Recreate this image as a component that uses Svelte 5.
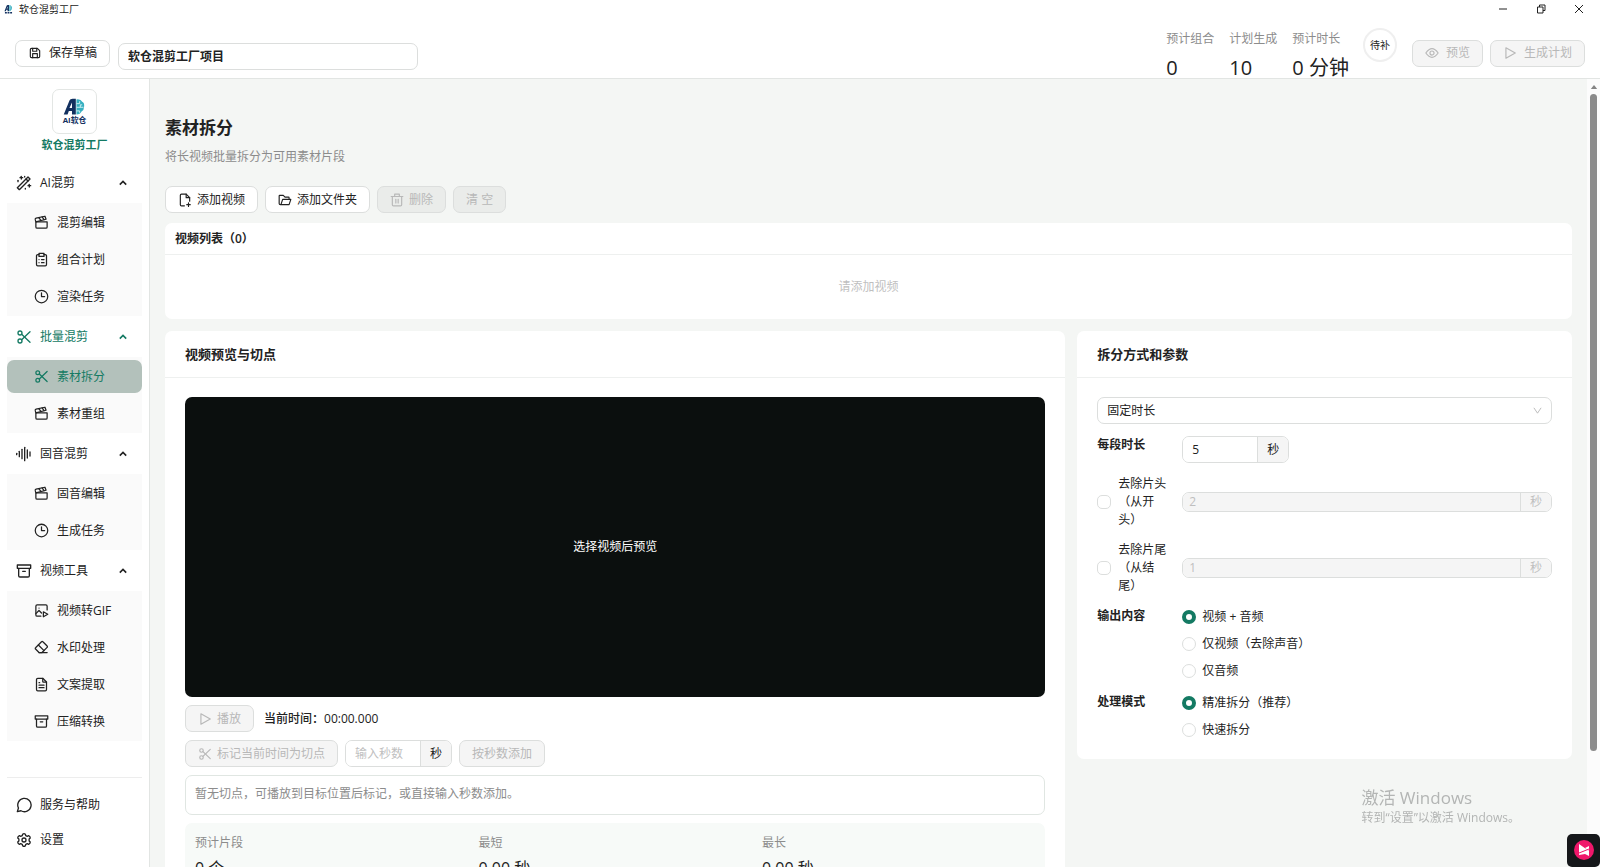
<script>
	const icons = {
		save: ['M6 4h10l4 4v10a2 2 0 0 1-2 2H6a2 2 0 0 1-2-2V6a2 2 0 0 1 2-2', 'M8 4v5h7V4', 'M8 20v-7h8v7'],
		wand: ['M5 22L21 6l-3-3L2 19z', 'M15 6l3 3', 'M8 2v4', 'M6 4h4', 'M20 14v4', 'M18 16h4', 'M3 8v2', 'M13 2v1', 'M14 20v1'],
		clapper: ['M3 11h18v8a2 2 0 0 1-2 2H5a2 2 0 0 1-2-2z', 'M3 11L2 7.500a2 2 0 0 1 1.400-2.400L17.500 2l1.800 4.800z', 'M8 4.500l3 4', 'M13 3l3 4.500'],
		clipboard: ['M8 4H6a2 2 0 0 0-2 2v14a2 2 0 0 0 2 2h12a2 2 0 0 0 2-2V6a2 2 0 0 0-2-2h-2', 'M8 2h8v5H8z', 'M8 12h.01', 'M8 17h.01', 'M12 12h4', 'M12 17h4'],
		clock: ['M2 12a10 10 0 1 0 20 0a10 10 0 1 0-20 0', 'M12 6v6h5'],
		scissors: ['M3 6a3 3 0 1 0 6 0a3 3 0 1 0-6 0', 'M3 18a3 3 0 1 0 6 0a3 3 0 1 0-6 0', 'M8.500 8L21 20', 'M8.500 16L21 4'],
		wave: ['M1 11v2', 'M5 8v8', 'M9 5v14', 'M13 2v20', 'M17 6v12', 'M21 9v6'],
		archive: ['M2 3h20v5H2z', 'M4 8v11a2 2 0 0 0 2 2h12a2 2 0 0 0 2-2V8', 'M10 12.500h4'],
		gif: ['M11 21H5a2 2 0 0 1-2-2V5a2 2 0 0 1 2-2h14a2 2 0 0 1 2 2v6', 'M8 8h.01', 'M3 17l5-5l4 4', 'M15 14l7 4l-7 4z'],
		eraser: ['M8 20l-5.500-5.500a1.500 1.500 0 0 1 0-2.200L12 2.800a1.500 1.500 0 0 1 2.200 0l6.800 6.800a1.500 1.500 0 0 1 0 2.200L12.800 20z', 'M7 8l9 9', 'M8 20h13'],
		file: ['M14 2v5a1 1 0 0 0 1 1h5', 'M18 22H6a2 2 0 0 1-2-2V4a2 2 0 0 1 2-2h8l6 6v12a2 2 0 0 1-2 2z', 'M8 9h1', 'M8 13h8', 'M8 17h8'],
		message: ['M2 22l1.700-5.500A10 10 0 1 1 7.500 20.600z'],
		settings: ['M10 3.500q2-2 4 0l.700 2 2.200.900 2-.800q2.500 1 2.500 3.500l-1.700 1.500v2.800l1.700 1.500q0 2.500-2.500 3.500l-2-.800-2.200.900-.700 2q-2 2-4 0l-.700-2-2.200-.900-2 .800q-2.500-1-2.500-3.500l1.700-1.500v-2.800L2.600 9.100q0-2.500 2.500-3.500l2 .800 2.200-.900z', 'M9 12a3 3 0 1 0 6 0a3 3 0 1 0-6 0'],
		fileAdd: ['M11 22H6a2 2 0 0 1-2-2V4a2 2 0 0 1 2-2h8l6 6v6', 'M14 2v6h6', 'M18 17v6', 'M15 20h6'],
		folder: ['M5 20L8 11h14l-3 9H4a2 2 0 0 1-2-2V5a1 1 0 0 1 1-1h6l3 3h6a1 1 0 0 1 1 1v3'],
		trash: ['M2 6h20', 'M4 6v14a2 2 0 0 0 2 2h12a2 2 0 0 0 2-2V6', 'M8 6V2h8v4', 'M10 11v6', 'M14 11v6'],
		eye: ['M1.500 12q10.500-15 21 0q-10.500 15-21 0', 'M8.500 12a3.500 3.500 0 1 0 7 0a3.500 3.500 0 1 0-7 0'],
		play: ['M5 3l16 9l-16 9z']
	};

	const menu = [
		{
			label: 'AI混剪', icon: 'wand',
			items: [
				{ label: '混剪编辑', icon: 'clapper' },
				{ label: '组合计划', icon: 'clipboard' },
				{ label: '渲染任务', icon: 'clock' }
			]
		},
		{
			label: '批量混剪', icon: 'scissors', active: true,
			items: [
				{ label: '素材拆分', icon: 'scissors', active: true },
				{ label: '素材重组', icon: 'clapper' }
			]
		},
		{
			label: '固音混剪', icon: 'wave',
			items: [
				{ label: '固音编辑', icon: 'clapper' },
				{ label: '生成任务', icon: 'clock' }
			]
		},
		{
			label: '视频工具', icon: 'archive',
			items: [
				{ label: '视频转GIF', icon: 'gif' },
				{ label: '水印处理', icon: 'eraser' },
				{ label: '文案提取', icon: 'file' },
				{ label: '压缩转换', icon: 'archive' }
			]
		}
	];

	const planStats = [
		{ label: '预计组合', value: '0' },
		{ label: '计划生成', value: '10' },
		{ label: '预计时长', value: '0 分钟' }
	];

	const splitStats = [
		{ label: '预计片段', value: '0 个' },
		{ label: '最短', value: '0.00 秒' },
		{ label: '最长', value: '0.00 秒' }
	];

	let projectName = $state('软仓混剪工厂项目');
	let splitMode = $state('fixed');
	let segment = $state('5');
	let markSeconds = $state('');
	let trimHead = $state(false);
	let trimTail = $state(false);
	let headSeconds = $state('2');
	let tailSeconds = $state('1');
	let output = $state('both');
	let process = $state('precise');
</script>

{#snippet icon(name)}
	<svg class="icon" viewBox="0 0 24 24" aria-hidden="true">
		{#each icons[name] as d}
			<path {d} />
		{/each}
	</svg>
{/snippet}

{#snippet mark()}
	<path d="M0 26L9 3Q10 0 14 0h5v26h-6v-6H8l-2 6zM9 15h4V6z" fill="#12305f" fill-rule="evenodd" />
	<path d="M20 1q7-1 9 4q4 2 3 8q0 6-4 8q-2 5-8 5z" fill="#35afc0" />
	<path d="M20 8h5v-4M20 14h11M20 20h5v3M26 14v-4h3" stroke="#d5f2f4" stroke-width="1.500" fill="none" />
{/snippet}

<div class="app">
	<div class="titlebar">
		<svg class="tiny-logo" viewBox="0 0 34 38" aria-hidden="true">
			{@render mark()}
			<path d="M2 33h30" stroke="#12305f" stroke-width="6" stroke-dasharray="8 3" />
		</svg>
		<span>软仓混剪工厂</span>
		<div class="window-controls">
			<button aria-label="最小化"><svg viewBox="0 0 10 10"><path d="M1 5h8" /></svg></button>
			<button aria-label="还原"><svg viewBox="0 0 10 10"><path d="M1.500 3h5.500v6h-5.500zM3.500 3V1h5.500v5.500H7" /></svg></button>
			<button aria-label="关闭"><svg viewBox="0 0 10 10"><path d="M1 1l8 8M9 1l-8 8" /></svg></button>
		</div>
	</div>

	<header class="header">
		<button class="btn">{@render icon('save')}保存草稿</button>
		<input class="field project" aria-label="项目名称" bind:value={projectName} />
		<dl class="plan">
			{#each planStats as stat}
				<div>
					<dt>{stat.label}</dt>
					<dd>{stat.value}</dd>
				</div>
			{/each}
		</dl>
		<div class="badge">待补</div>
		<div class="actions">
			<button class="btn" disabled>{@render icon('eye')}预览</button>
			<button class="btn" disabled>{@render icon('play')}生成计划</button>
		</div>
	</header>

	<div class="body">
		<aside class="sidebar">
			<div class="brand">
				<div class="logo">
					<svg viewBox="0 0 44 44" role="img" aria-label="AI软仓">
						<g transform="translate(11 9) scale(.65 .62)">{@render mark()}</g>
						<text x="22" y="34" text-anchor="middle">AI软仓</text>
					</svg>
				</div>
				<strong>软仓混剪工厂</strong>
			</div>
			<nav>
				{#each menu as group}
					<button class="group" class:active={group.active}>
						{@render icon(group.icon)}
						<span>{group.label}</span>
						<svg class="arrow" viewBox="0 0 10 10" aria-hidden="true"><path d="M1 7l4-4l4 4" /></svg>
					</button>
					<div class="sub">
						{#each group.items as item}
							<a href="#{item.label}" class:active={item.active}>{@render icon(item.icon)}{item.label}</a>
						{/each}
					</div>
				{/each}
			</nav>
			<div class="bottom">
				<a href="#help">{@render icon('message')}服务与帮助</a>
				<a href="#settings">{@render icon('settings')}设置</a>
			</div>
		</aside>

		<main class="content">
			<h1>素材拆分</h1>
			<p class="desc">将长视频批量拆分为可用素材片段</p>

			<div class="toolbar">
				<button class="btn">{@render icon('fileAdd')}添加视频</button>
				<button class="btn">{@render icon('folder')}添加文件夹</button>
				<button class="btn" disabled>{@render icon('trash')}删除</button>
				<button class="btn" disabled>清 空</button>
			</div>

			<section class="card list">
				<h2>视频列表（0）</h2>
				<p>请添加视频</p>
			</section>

			<div class="columns">
				<section class="card panel">
					<h2>视频预览与切点</h2>
					<div class="panel-body preview">
						<div class="video">选择视频后预览</div>
						<div class="row">
							<button class="btn" disabled>{@render icon('play')}播放</button>
							<span class="time">当前时间：00:00.000</span>
						</div>
						<div class="row">
							<button class="btn" disabled>{@render icon('scissors')}标记当前时间为切点</button>
							<div class="group-input short">
								<input aria-label="秒数" placeholder="输入秒数" bind:value={markSeconds} />
								<span>秒</span>
							</div>
							<button class="btn" disabled>按秒数添加</button>
						</div>
						<p class="cuts">暂无切点，可播放到目标位置后标记，或直接输入秒数添加。</p>
						<dl class="split-stats">
							{#each splitStats as stat}
								<div>
									<dt>{stat.label}</dt>
									<dd>{stat.value}</dd>
								</div>
							{/each}
						</dl>
					</div>
				</section>

				<section class="card panel">
					<h2>拆分方式和参数</h2>
					<div class="panel-body params">
						<div class="select">
							<select class="field" aria-label="拆分方式" bind:value={splitMode}>
								<option value="fixed">固定时长</option>
							</select>
							<svg viewBox="0 0 10 10" aria-hidden="true"><path d="M1 2l4 6l4-6" /></svg>
						</div>

						<div class="param">
							<label class="name" for="segment">每段时长</label>
							<div class="group-input short">
								<input id="segment" bind:value={segment} />
								<span>秒</span>
							</div>
						</div>

						<div class="param middle">
							<label class="check">
								<input type="checkbox" bind:checked={trimHead} />
								<span>去除片头（从开头）</span>
							</label>
							<div class="group-input small" class:disabled={!trimHead}>
								<input aria-label="片头秒数" bind:value={headSeconds} disabled={!trimHead} />
								<span>秒</span>
							</div>
						</div>

						<div class="param middle">
							<label class="check">
								<input type="checkbox" bind:checked={trimTail} />
								<span>去除片尾（从结尾）</span>
							</label>
							<div class="group-input small" class:disabled={!trimTail}>
								<input aria-label="片尾秒数" bind:value={tailSeconds} disabled={!trimTail} />
								<span>秒</span>
							</div>
						</div>

						<div class="param" role="radiogroup" aria-labelledby="output-name">
							<span class="name" id="output-name">输出内容</span>
							<div class="radios">
								<label><input type="radio" value="both" bind:group={output} />视频 + 音频</label>
								<label><input type="radio" value="video" bind:group={output} />仅视频（去除声音）</label>
								<label><input type="radio" value="audio" bind:group={output} />仅音频</label>
							</div>
						</div>

						<div class="param" role="radiogroup" aria-labelledby="process-name">
							<span class="name" id="process-name">处理模式</span>
							<div class="radios">
								<label><input type="radio" value="precise" bind:group={process} />精准拆分（推荐）</label>
								<label><input type="radio" value="fast" bind:group={process} />快速拆分</label>
							</div>
						</div>
					</div>
				</section>
			</div>
		</main>

		<div class="scrollbar" aria-hidden="true">
			<svg viewBox="0 0 8 5"><path d="M0 5l4-5l4 5z" /></svg>
			<div class="thumb"></div>
		</div>
	</div>

	<div class="watermark">
		<div>激活 Windows</div>
		<p>转到“设置”以激活 Windows。</p>
	</div>

	<button class="recorder" aria-label="录制">
		<svg viewBox="0 0 33 33">
			<circle cx="17" cy="16" r="10" fill="#f0176b" />
			<path d="M12 10l10 7v5l-4-2l-6 1z" fill="#fff" />
			<path d="M18 14l4-2v5z" fill="#fff" />
			<path d="M12 19l10-4" stroke="#f0176b" />
		</svg>
	</button>
</div>

<style>
	:global(body) {
		background: #fff;
	}

	.app {
		display: flex;
		flex-direction: column;
		height: 100vh;
		overflow: hidden;
		font: 12px/18px "Open Sans", "Noto Sans CJK SC", sans-serif;
		color: #222;
	}

	.app :global(*) {
		box-sizing: border-box;
	}

	button,
	input,
	select {
		font: inherit;
		color: inherit;
		margin: 0;
	}

	h1,
	h2,
	p,
	dl,
	dd {
		margin: 0;
	}

	a {
		color: inherit;
		text-decoration: none;
	}

	svg {
		fill: none;
		stroke: currentColor;
		display: block;
	}

	.icon {
		width: 16px;
		height: 16px;
		flex: none;
		stroke-width: 2;
		stroke-linecap: round;
		stroke-linejoin: round;
	}

	.btn {
		display: flex;
		align-items: center;
		justify-content: center;
		gap: 5px;
		height: 27px;
		padding: 0 12px;
		background: #fff;
		border: 1px solid #dcdedd;
		border-radius: 7px;
		white-space: nowrap;
	}

	.btn .icon {
		width: 14px;
		height: 14px;
	}

	.btn:disabled {
		background: rgba(0, 0, 0, 0.04);
		color: #b8b8b8;
	}

	.field {
		height: 27px;
		padding: 0 9px;
		border: 1px solid #dcdedd;
		border-radius: 7px;
		background: #fff;
	}

	/* window title */
	.titlebar {
		display: flex;
		align-items: center;
		flex: none;
		gap: 6px;
		height: 20px;
		padding: 0 16px 2px 4px;
		font-size: 10px;
	}

	.tiny-logo {
		width: 9px;
		height: 9px;
		stroke: none;
	}

	.window-controls {
		display: flex;
		gap: 28px;
		margin-left: auto;
	}

	.window-controls button {
		padding: 0;
		border: 0;
		background: none;
	}

	.window-controls svg {
		width: 10px;
		height: 10px;
	}

	/* header */
	.header {
		display: flex;
		align-items: center;
		flex: none;
		height: 59px;
		padding: 8px 15px 0;
		border-bottom: 1px solid #e2e5e3;
	}

	.header .btn {
		gap: 7px;
	}

	.project {
		width: 300px;
		margin: 6px 0 0 8px;
		font-weight: 600;
	}

	.plan {
		display: flex;
		align-self: flex-start;
		gap: 15px;
		margin-left: auto;
	}

	.plan dt {
		line-height: 22px;
		color: #8c8c8c;
	}

	.plan dd {
		margin-top: 3px;
		font-size: 20px;
		line-height: 30px;
	}

	.badge {
		display: flex;
		align-items: center;
		justify-content: center;
		align-self: flex-start;
		width: 34px;
		height: 34px;
		margin-left: 14px;
		border: 2px solid #efefef;
		border-radius: 50%;
		font-size: 10px;
	}

	.actions {
		display: flex;
		gap: 7px;
		margin-left: 15px;
	}

	.body {
		display: flex;
		flex: 1;
		min-height: 0;
	}

	/* sidebar */
	.sidebar {
		display: flex;
		flex-direction: column;
		flex: none;
		width: 150px;
		padding: 10px 7px;
		border-right: 1px solid #e2e5e3;
	}

	.brand {
		display: flex;
		flex-direction: column;
		align-items: center;
		gap: 2px;
		font-size: 11px;
		color: #147a63;
	}

	.brand strong {
		font-weight: 600;
	}

	.logo {
		width: 45px;
		height: 45px;
		border: 1px solid #e3e6e4;
		border-radius: 7px;
	}

	.logo svg {
		stroke: none;
	}

	.logo text {
		font-size: 8px;
		font-weight: 700;
		fill: #12305f;
	}

	nav {
		padding-top: 8px;
	}

	.group {
		display: flex;
		align-items: center;
		gap: 8px;
		width: 100%;
		height: 41px;
		padding: 0 15px 0 9px;
		border: 0;
		background: none;
	}

	.arrow {
		width: 8px;
		height: 8px;
		margin-left: auto;
		stroke-width: 2;
	}

	.group.active {
		color: #147a63;
	}

	.sub {
		padding: 1px 0;
		background: #fafafa;
	}

	.sub a {
		display: flex;
		align-items: center;
		gap: 8px;
		height: 33px;
		margin: 2px 0 4px;
		padding-left: 27px;
		border-radius: 7px;
	}

	.sub a:last-child {
		margin-bottom: 2px;
	}

	.sub .icon {
		width: 15px;
		height: 15px;
	}

	.sub a.active {
		background: #b3c1bb;
		color: #147a63;
	}

	.bottom {
		margin-top: auto;
		padding-top: 9px;
		border-top: 1px solid #ededed;
	}

	.bottom a {
		display: flex;
		align-items: center;
		gap: 8px;
		height: 35px;
		padding-left: 9px;
	}

	/* content */
	.content {
		flex: 1;
		min-width: 0;
		padding: 36px 15px 16px;
		overflow-y: auto;
		scrollbar-width: none;
		background: #f4f6f4;
	}

	h1 {
		font-size: 17px;
		line-height: 26px;
		font-weight: 700;
	}

	.desc {
		margin-top: 7px;
		color: #8c8c8c;
	}

	.toolbar {
		display: flex;
		gap: 7px;
		margin: 20px 0 10px;
	}

	.card {
		background: #fff;
		border-radius: 7px;
	}

	.list h2 {
		padding: 6px 10px;
		border-bottom: 1px solid #eef0ef;
		font-size: 12px;
		line-height: 19px;
		font-weight: 600;
	}

	.list p {
		padding: 23px;
		text-align: center;
		color: #bfbfbf;
	}

	.columns {
		display: grid;
		grid-template-columns: minmax(0, 182fr) minmax(0, 100fr);
		align-items: start;
		gap: 12px;
		margin-top: 12px;
	}

	.panel h2 {
		padding: 14px 20px 13px;
		border-bottom: 1px solid #eef0ef;
		font-size: 13px;
		line-height: 19px;
		font-weight: 600;
	}

	.panel-body {
		display: flex;
		flex-direction: column;
		padding: 19px 20px;
	}

	.preview {
		gap: 8px;
	}

	.video {
		display: flex;
		align-items: center;
		justify-content: center;
		height: 300px;
		border-radius: 7px;
		background: #0b0f0e;
		color: #fff;
	}

	.row {
		display: flex;
		align-items: center;
		gap: 7px;
	}

	.time {
		margin-left: 3px;
		font-weight: 500;
	}

	.cuts {
		padding: 9px 9px 11px;
		border: 1px solid #e0e6e2;
		border-radius: 7px;
		color: #8c8c8c;
	}

	.split-stats {
		display: grid;
		grid-template-columns: repeat(3, 1fr);
		gap: 10px;
		padding: 10px;
		border-radius: 7px;
		background: #f7faf8;
	}

	.split-stats dt {
		line-height: 20px;
		color: #8c8c8c;
	}

	.split-stats dd {
		margin-top: 3px;
		font-size: 16px;
		line-height: 24px;
	}

	.group-input {
		display: flex;
		height: 27px;
		border: 1px solid #dcdedd;
		border-radius: 7px;
		overflow: hidden;
	}

	.group-input input {
		flex: 1;
		width: 0;
		min-width: 0;
		padding: 0 9px;
		border: 0;
		background: #fff;
	}

	.group-input input::placeholder {
		color: #bfbfbf;
	}

	.group-input span {
		display: flex;
		align-items: center;
		justify-content: center;
		width: 31px;
		border-left: 1px solid #dcdedd;
		background: #f5f5f5;
	}

	.group-input.short {
		width: 107px;
	}

	.group-input.small {
		height: 20px;
	}

	.group-input.small input {
		padding: 0 6px;
	}

	.group-input.disabled input,
	.group-input.disabled span {
		background: #f5f5f5;
		color: #bfbfbf;
	}

	.params {
		gap: 12px;
	}

	.select {
		position: relative;
	}

	.select select {
		width: 100%;
		appearance: none;
	}

	.select svg {
		position: absolute;
		top: 9px;
		right: 10px;
		width: 9px;
		height: 9px;
		color: #b5b5b5;
		pointer-events: none;
	}

	.param {
		display: grid;
		grid-template-columns: 75px minmax(0, 1fr);
		align-items: start;
		gap: 10px;
	}

	.param.middle {
		align-items: center;
	}

	.name {
		font-weight: 600;
	}

	.check {
		display: flex;
		align-items: center;
		gap: 7px;
		padding-right: 5px;
	}

	.check input,
	.radios input {
		appearance: none;
		flex: none;
		width: 14px;
		height: 14px;
		border: 1px solid #dcdedd;
		border-radius: 5px;
		background: #fff;
	}

	.check input:checked {
		background: #147a63;
	}

	.radios {
		display: flex;
		flex-direction: column;
		gap: 7px;
	}

	.radios label {
		display: flex;
		align-items: center;
		gap: 6px;
		height: 20px;
	}

	.radios input {
		border-radius: 50%;
	}

	.radios input:checked {
		border: 4px solid #147a63;
	}

	.scrollbar {
		display: flex;
		flex-direction: column;
		align-items: center;
		flex: none;
		gap: 5px;
		width: 13px;
		padding-top: 6px;
		background: #fcfcfc;
	}

	.scrollbar svg {
		width: 8px;
		height: 4px;
		fill: #858585;
		stroke: none;
	}

	.thumb {
		width: 7px;
		height: 84%;
		border-radius: 4px;
		background: #8b8b8b;
	}

	/* floating over the page */
	.watermark {
		position: fixed;
		right: 80px;
		bottom: 40px;
		color: #b3b5b4;
		pointer-events: none;
	}

	.watermark div {
		font-size: 17px;
		line-height: 22px;
	}

	.recorder {
		position: fixed;
		right: 0;
		bottom: 0;
		width: 33px;
		height: 33px;
		padding: 0;
		border: 0;
		border-radius: 5px;
		background: #15171a;
	}

	.recorder svg {
		stroke: none;
	}
</style>
